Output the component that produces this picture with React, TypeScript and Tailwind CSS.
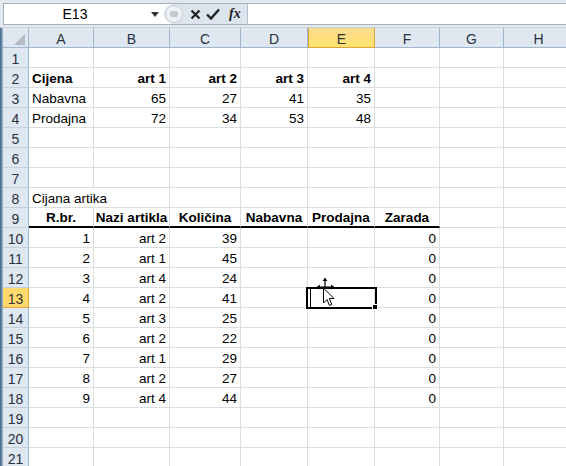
import clsx from 'clsx';

type CellDef = { v?: string | number; align?: 'left' | 'right' | 'center'; bold?: boolean };

const COLS = ['A', 'B', 'C', 'D', 'E', 'F', 'G', 'H'];

const sales: [number, string, number][] = [
  [1, 'art 2', 39],
  [2, 'art 1', 45],
  [3, 'art 4', 24],
  [4, 'art 2', 41],
  [5, 'art 3', 25],
  [6, 'art 2', 22],
  [7, 'art 1', 29],
  [8, 'art 2', 27],
  [9, 'art 4', 44],
];

const r = (v: string | number, bold = false): CellDef => ({ v, align: 'right', bold });
const l = (v: string, bold = false): CellDef => ({ v, align: 'left', bold });
const c = (v: string): CellDef => ({ v, align: 'center', bold: true });

// sheet content by row number
const sheet: Record<number, CellDef[]> = {
  2: [l('Cijena', true), r('art 1', true), r('art 2', true), r('art 3', true), r('art 4', true)],
  3: [l('Nabavna'), r(65), r(27), r(41), r(35)],
  4: [l('Prodajna'), r(72), r(34), r(53), r(48)],
  8: [l('Cijana artika')],
  9: [c('R.br.'), c('Nazi artikla'), c('Količina'), c('Nabavna'), c('Prodajna'), c('Zarada')],
};
sales.forEach(([n, art, qty], i) => {
  sheet[10 + i] = [r(n), r(art), r(qty), {}, {}, r(0)];
});

function FormulaBar() {
  return (
    <div className="h-[28px] bg-[#e3e8ee] border-b border-[#c9d0d8] pt-[3px]">
      <div className="flex h-[22px] ml-[3px] border-t border-b border-l border-[#a7afb8] bg-white">
        <div className="w-[142px] flex items-center justify-center text-[14px] text-black">E13</div>
        <div className="w-[18px] flex items-center justify-center">
          <svg width="8" height="5" viewBox="0 0 8 5">
            <path d="M0 0 H8 L4 5 Z" fill="#333" />
          </svg>
        </div>
        <div className="w-[84px] flex items-center bg-[#dce4ee] rounded-l-full border-r border-[#b6bfca]">
          <div className="ml-[1px] w-[18px] h-[18px] rounded-full bg-[#eef1f4] border border-[#c9d0d8] flex items-center justify-center">
            <div className="w-[8px] h-[6px] rounded-[2px] bg-[#c4c9cf]" />
          </div>
          <svg className="ml-[7px]" width="11" height="11" viewBox="0 0 11 11">
            <path d="M1.5 1.5 L9.5 9.5 M9.5 1.5 L1.5 9.5" stroke="#222" strokeWidth="2.2" />
          </svg>
          <svg className="ml-[5px]" width="14" height="12" viewBox="0 0 14 12">
            <path d="M1 6.5 L5 10.5 L13 1.5" stroke="#222" strokeWidth="2.4" fill="none" />
          </svg>
          <span className="ml-[9px] italic font-bold text-[14px] text-[#222] font-['Liberation_Serif',serif] leading-none">
            fx
          </span>
        </div>
        <div className="flex-1 bg-white" />
      </div>
    </div>
  );
}

export default function App() {
  const rows = Array.from({ length: 21 }, (_, i) => i + 1);

  return (
    <div className="relative w-[566px] h-[466px] overflow-hidden bg-white font-['Liberation_Sans',Arial,sans-serif] text-[13.5px] text-black">
      <FormulaBar />
      <div className="flex">
        <div className="w-[3px] shrink-0 h-[440px] bg-gradient-to-r from-[#3f5f86] to-[#a3b9d0]" />
        <div className="grid grid-cols-[26px_65px_76px_71px_67px_67px_65px_64px_70px] auto-rows-[20px]">
          {/* corner */}
          <div className="bg-[#dfe7f1] border-r border-b border-[#9eb6ce] relative">
            <svg className="absolute right-[3px] bottom-[2px]" width="11" height="11" viewBox="0 0 11 11">
              <path d="M11 0 V11 H0 Z" fill="#b4bcc6" />
            </svg>
          </div>
          {COLS.map((col) => (
            <div
              key={col}
              className={clsx(
                'flex items-center justify-center pt-[3px] text-[14px] border-b',
                col === 'E'
                  ? 'bg-gradient-to-b from-[#f9d98c] to-[#ffe46e] border-r border-l border-[#e0a23d] text-[#333]'
                  : 'bg-[#dfe7f1] border-r border-[#9eb6ce] text-[#27323e]',
                col === 'E' ? 'border-b-[#e0a23d]' : 'border-b-[#9eb6ce]'
              )}
            >
              {col}
            </div>
          ))}

          {rows.map((row) => {
            const defs = sheet[row] || [];
            return [
              <div
                key={`h${row}`}
                className={clsx(
                  'flex items-center justify-center pt-[3px] text-[14px] border-r border-b',
                  row === 13
                    ? 'bg-[#ffd96c] border-[#e9a23b] text-[#333]'
                    : 'bg-[#dfe7f1] border-r-[#9eb6ce] border-b-[#c3d0de] text-[#27323e]'
                )}
              >
                {row}
              </div>,
              ...COLS.map((col, ci) => {
                const d = defs[ci] || {};
                const overflow = row === 8 && ci === 0;
                const headerLine = row === 9 && ci < 6;
                return (
                  <div
                    key={`${col}${row}`}
                    className={clsx(
                      'flex items-center px-[3px] pt-[3px] whitespace-nowrap border-r',
                      overflow ? 'overflow-visible border-r-transparent' : 'overflow-hidden border-r-[#dadcdd]',
                      headerLine ? 'border-b-2 border-b-black' : 'border-b border-b-[#dadcdd]',
                      d.align === 'right' && 'justify-end',
                      d.align === 'center' && 'justify-center',
                      d.bold && 'font-bold'
                    )}
                  >
                    {d.v}
                  </div>
                );
              }),
            ];
          })}
        </div>
      </div>

      {/* active cell E13 */}
      <div className="absolute left-[306px] top-[287px] w-[71px] h-[22px] border-2 border-black">
        <div className="absolute left-[2px] top-0 bottom-0 w-px bg-black" />
        <div className="absolute -right-[3px] -bottom-[3px] w-[6px] h-[6px] bg-black border border-white" />
      </div>

      {/* mouse cursor */}
      <svg className="absolute left-[312px] top-[276px]" width="30" height="34" viewBox="0 0 30 34">
        <path d="M13 2 V11 M5 11 H22" stroke="#000" strokeWidth="1.2" />
        <path d="M10.5 5 L13 2 L15.5 5 Z" fill="#000" />
        <path d="M5 11 L8 8.5 L8 13.5 Z" fill="#000" />
        <path d="M22 11 L19 8.5 L19 13.5 Z" fill="#000" />
        <path
          d="M11.5 12 L11.5 27 L15 23.5 L17.5 29.5 L19.8 28.5 L17.3 22.5 L22 22.5 Z"
          fill="#fff"
          stroke="#000"
          strokeWidth="1"
          strokeLinejoin="miter"
        />
      </svg>
    </div>
  );
}
